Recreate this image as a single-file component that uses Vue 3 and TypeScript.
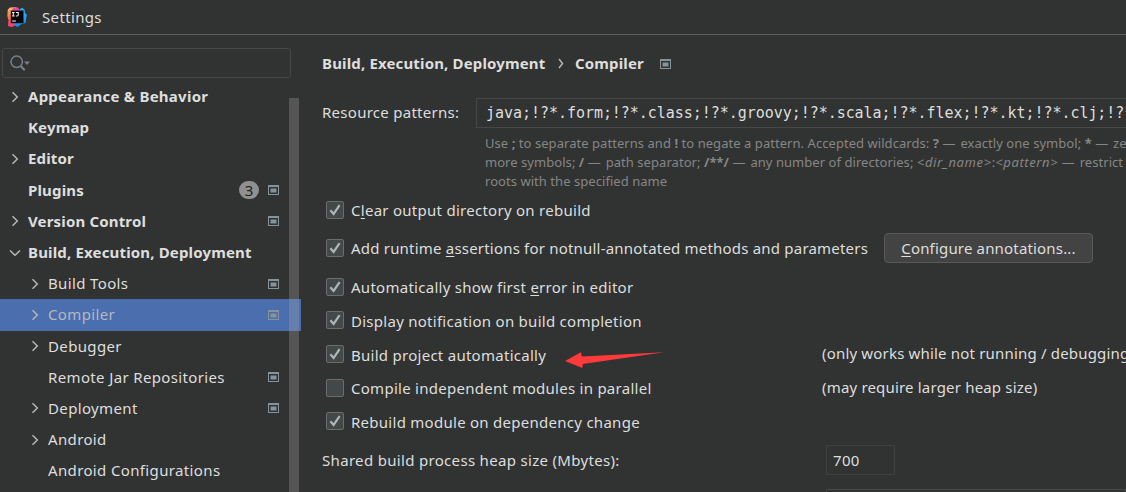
<script setup lang="ts">
interface TreeRow {
  label: string
  level: 0 | 1
  arrow?: 'right' | 'down'
  badge?: number
  project?: boolean
  selected?: boolean
}

interface Option {
  before: string
  mnemonic?: string
  after?: string
  checked: boolean
  note?: string
  action?: boolean
  size: string
}

const rows: TreeRow[] = [
  { label: 'Appearance & Behavior', level: 0, arrow: 'right' },
  { label: 'Keymap', level: 0 },
  { label: 'Editor', level: 0, arrow: 'right' },
  { label: 'Plugins', level: 0, badge: 3, project: true },
  { label: 'Version Control', level: 0, arrow: 'right', project: true },
  { label: 'Build, Execution, Deployment', level: 0, arrow: 'down' },
  { label: 'Build Tools', level: 1, arrow: 'right', project: true },
  { label: 'Compiler', level: 1, arrow: 'right', project: true, selected: true },
  { label: 'Debugger', level: 1, arrow: 'right' },
  { label: 'Remote Jar Repositories', level: 1, project: true },
  { label: 'Deployment', level: 1, arrow: 'right', project: true },
  { label: 'Android', level: 1, arrow: 'right' },
  { label: 'Android Configurations', level: 1 },
]

const options: Option[] = [
  { before: 'C', mnemonic: 'l', after: 'ear output directory on rebuild', checked: true, size: 'tall' },
  { before: 'Add runtime ', mnemonic: 'a', after: 'ssertions for notnull-annotated methods and parameters', checked: true, action: true, size: 'taller' },
  { before: 'Automatically show first ', mnemonic: 'e', after: 'rror in editor', checked: true, size: 'medium' },
  { before: 'Display notification on build completion', checked: true, size: 'short' },
  { before: 'Build project automatically', checked: true, note: '(only works while not running / debugging)', size: 'short' },
  { before: 'Compile independent modules in parallel', checked: false, note: '(may require larger heap size)', size: 'short' },
  { before: 'Rebuild module on dependency change', checked: true, size: 'short' },
]
</script>

<template>
  <div class="window">
    <header class="titlebar">
      <svg class="logo" width="20" height="20" viewBox="0 0 20 20">
        <defs>
          <linearGradient id="warm" x1="0" y1="0" x2="0" y2="1">
            <stop offset="0" stop-color="#fdc06a" />
            <stop offset=".4" stop-color="#fb8a3c" />
            <stop offset=".7" stop-color="#ff5560" />
            <stop offset="1" stop-color="#fa3b6c" />
          </linearGradient>
          <linearGradient id="cool" x1="0" y1="0" x2="0" y2="1">
            <stop offset="0" stop-color="#2fb4fa" />
            <stop offset="1" stop-color="#0c8df5" />
          </linearGradient>
        </defs>
        <path d="M.800 2.500L3 .5l6-.3L11 3 8 17l-2 2.500L1 19l1-4L.3 9z" fill="url(#warm)" />
        <path d="M6 .8L10.500.3l3.500 4L4 8.500z" fill="#f0479f" />
        <path d="M12 3L15 .8l2.500 1.700.5 3.500 1.800 1.500L18.500 16l-4 1-4 3-6-3 9-2z" fill="url(#cool)" />
        <path d="M1.200 14l5 1 2 3-3 2-4-1z" fill="#f7436d" />
        <rect x="3.800" y="3.500" width="12.700" height="12.700" fill="#0b0508" />
        <path d="M5 5.500h2.600M6.300 5.500v3.600M5 9h2.600M9 5.500h2.200v2.600q0 .9-1 .9H8.800M5 14h4" fill="none" stroke="#f1eeee" stroke-width="1.100" />
      </svg>
      <span class="title">Settings</span>
    </header>

    <div class="body">
      <aside class="sidebar">
        <div class="search">
          <svg width="22" height="17" viewBox="0 0 22 17">
            <circle cx="6.700" cy="6.800" r="5.700" fill="none" stroke="#77828a" stroke-width="1.500" />
            <path d="M10.700 11l4 4.300" stroke="#77828a" stroke-width="2" />
            <path d="M14 6.500h6l-3 3.500z" fill="#77828a" />
          </svg>
        </div>
        <div class="tree">
          <div class="rows">
            <div
              v-for="row in rows"
              :key="row.label"
              class="row"
              :class="{ child: row.level === 1, selected: row.selected }"
            >
              <span class="arrow">
                <svg v-if="row.arrow === 'right'" width="12" height="12" viewBox="0 0 12 12">
                  <path d="M3.500 1.300L8.300 6l-4.800 4.700" />
                </svg>
                <svg v-else-if="row.arrow === 'down'" width="12" height="12" viewBox="0 0 12 12">
                  <path d="M1 3.500l5 4.800 5-4.800" />
                </svg>
              </span>
              <span class="label">{{ row.label }}</span>
              <span v-if="row.badge" class="badge">{{ row.badge }}</span>
              <span class="slot">
                <svg v-if="row.project" class="project" width="11" height="10" viewBox="0 0 11 10">
                  <path d="M0 0h11v10H0zM1 2v7h9V2z" fill-rule="evenodd" />
                  <path d="M2.500 3.500h6v4h-6z" />
                </svg>
              </span>
            </div>
          </div>
          <div class="scrollbar"></div>
        </div>
      </aside>

      <main class="content">
        <div class="crumbs">
          <span>Build, Execution, Deployment</span>
          <svg class="sep" width="6" height="11" viewBox="0 0 6 11">
            <path d="M1 1l3.500 4.500L1 10" />
          </svg>
          <span>Compiler</span>
          <svg class="project" width="11" height="10" viewBox="0 0 11 10">
            <path d="M0 0h11v10H0zM1 2v7h9V2z" fill-rule="evenodd" />
            <path d="M2.500 3.500h6v4h-6z" />
          </svg>
        </div>

        <div class="patterns">
          <span class="patterns-label">Resource patterns:</span>
          <div class="patterns-input">java;!?*.form;!?*.class;!?*.groovy;!?*.scala;!?*.flex;!?*.kt;!?*.clj;!?*.aj</div>
        </div>
        <div class="hint">
          <div>Use <b>;</b> to separate patterns and <b>!</b> to negate a pattern. Accepted wildcards: <b>?</b> <s>—</s> exactly one symbol; <b>*</b> <s>—</s> zero or</div>
          <div>more symbols; <b>/</b> <s>—</s> path separator; <b>/**/</b> <s>—</s> any number of directories; <i>&lt;dir_name&gt;</i>:<i>&lt;pattern&gt;</i> <s>—</s> restrict to</div>
          <div>roots with the specified name</div>
        </div>

        <div v-for="option in options" :key="option.before" class="option" :class="option.size">
          <span class="box">
            <svg v-if="option.checked" width="16" height="16" viewBox="0 0 16 16">
              <path d="M3.400 8.300l3.200 3.600 6-8.700" fill="none" stroke="#b3b5b6" stroke-width="2.200" />
            </svg>
          </span>
          <span class="text">{{ option.before }}<u v-if="option.mnemonic">{{ option.mnemonic }}</u>{{ option.after }}</span>
          <button v-if="option.action" class="button"><span><u>C</u>onfigure annotations...</span></button>
          <span v-if="option.note" class="note">{{ option.note }}</span>
        </div>

        <div class="heap">
          <span class="heap-label">Shared build process heap size (Mbytes):</span>
          <div class="heap-input">700</div>
        </div>
        <div class="next-input"></div>
      </main>
    </div>

    <svg class="pointer" width="100" height="18" viewBox="0 0 100 18">
      <path d="M0 9L16 .3l.8 4.300L99 .2 17.800 12l-.4 4z" fill="#ff3a3a" />
    </svg>
  </div>
</template>

<style>
body {
  margin: 0;
  background: #313332;
}
</style>

<style scoped>
.window {
  position: relative;
  width: 1126px;
  height: 492px;
  overflow: hidden;
  display: flex;
  flex-direction: column;
  background: #313332;
  color: #dedede;
  font: 15px/20px "Noto Sans", "Open Sans", sans-serif;
  letter-spacing: .27px;
  white-space: nowrap;
}
.titlebar {
  flex: none;
  box-sizing: border-box;
  height: 35px;
  padding-left: 7px;
  border-bottom: 1px solid #5b5d5d;
  display: flex;
  align-items: center;
}
.title {
  margin-left: 15px;
  letter-spacing: .35px;
}
.body {
  flex: 1;
  min-height: 0;
  display: flex;
}
.sidebar {
  width: 301px;
  flex: none;
  display: flex;
  flex-direction: column;
}
.search {
  box-sizing: border-box;
  flex: none;
  width: 289px;
  height: 30px;
  margin: 13px 0 0 2px;
  padding: 6px 0 0 7px;
  border: 1px solid #454747;
  border-radius: 3px;
}
.search svg {
  display: block;
}
.tree {
  position: relative;
  flex: 1;
  min-height: 0;
  margin-top: 13px;
  overflow: hidden;
}
.rows {
  margin-top: -10px;
}
.row {
  height: 31.200px;
  box-sizing: border-box;
  padding-left: 9px;
  padding-right: 22px;
  display: flex;
  align-items: center;
  font-weight: 700;
  letter-spacing: .16px;
}
.row:first-child {
  letter-spacing: .25px;
}
.row.child {
  padding-left: 29px;
  font-weight: 400;
  letter-spacing: .36px;
}
.row.selected {
  background: #4b6eaf;
  color: #b4b9c0;
}
.arrow {
  width: 19px;
  height: 12px;
  flex: none;
}
.arrow svg {
  display: block;
}
.arrow path,
.sep path {
  fill: none;
  stroke: #b4b6b7;
  stroke-width: 1.500;
}
.label {
  flex: 1;
  padding-bottom: 1px;
}
.badge {
  width: 20px;
  height: 18px;
  border-radius: 9px;
  background: #909090;
  color: #202020;
  font-weight: 400;
  line-height: 19px;
  text-align: center;
}
.slot {
  width: 20px;
  height: 10px;
  display: flex;
  justify-content: flex-end;
}
.project {
  display: block;
  fill: #87939a;
}
.scrollbar {
  position: absolute;
  left: 289px;
  top: 7px;
  bottom: 0;
  width: 10px;
  background: rgba(166, 166, 166, .3);
}
.content {
  flex: 1;
  min-width: 0;
  padding-left: 21px;
  overflow: hidden;
}
.crumbs {
  height: 57px;
  display: flex;
  align-items: center;
  font-weight: 700;
  letter-spacing: .15px;
}
.crumbs span {
  padding-bottom: 2px;
}
.sep {
  margin: 0 11px 0 12.500px;
}
.crumbs .project {
  margin-left: 16px;
}
.patterns {
  height: 30px;
  margin-top: 6px;
  display: flex;
  align-items: center;
}
.patterns-label {
  width: 154px;
  flex: none;
  padding-bottom: 2px;
}
.patterns-input {
  box-sizing: border-box;
  flex: none;
  width: 700px;
  height: 30px;
  padding-left: 9px;
  border: 1px solid #464848;
  font: 15px/28px "DejaVu Sans Mono", monospace;
  letter-spacing: -.04px;
}
.hint {
  padding: 6px 0 0 163px;
  height: 57px;
  color: #868686;
  font-size: 13px;
  line-height: 19px;
  letter-spacing: .05px;
}
.hint s {
  text-decoration: none;
  letter-spacing: 1.500px;
}
.hint i {
  letter-spacing: .6px;
}
.option {
  display: flex;
  align-items: center;
  padding-left: 4px;
  height: 33.700px;
}
.option.tall {
  height: 38px;
}
.option.taller {
  height: 39px;
}
.option.medium {
  box-sizing: border-box;
  height: 36px;
  padding-top: 2px;
}
.box {
  box-sizing: border-box;
  width: 18px;
  height: 18px;
  flex: none;
  margin: 0 0 1px -.5px;
  border: 1px solid #6b6d6d;
  border-radius: 2px;
  background: #434849;
}
.box svg {
  display: block;
}
.text {
  margin-left: 7.500px;
  width: 471px;
  flex: none;
}
.taller .text {
  width: 533px;
  padding-bottom: 1px;
  letter-spacing: .2px;
}
.note {
  padding-bottom: 3px;
  letter-spacing: .18px;
}
u {
  text-underline-offset: 2px;
}
.button {
  box-sizing: border-box;
  width: 209px;
  height: 30px;
  margin-bottom: 1px;
  padding: 0 0 1px;
  border: 1px solid #585a5a;
  border-radius: 4px;
  background: #434343;
  color: inherit;
  font: inherit;
  letter-spacing: .17px;
}
.heap {
  display: flex;
  align-items: center;
  height: 30px;
  margin-top: 6px;
  letter-spacing: .32px;
}
.heap-label {
  width: 504px;
}
.heap-input {
  box-sizing: border-box;
  width: 69px;
  height: 30px;
  padding-left: 6px;
  border: 1px solid #404242;
  line-height: 28px;
}
.next-input {
  margin: 14px 0 0 504px;
  height: 30px;
  border: 1px solid #464848;
}
.pointer {
  position: absolute;
  left: 565px;
  top: 352px;
}
</style>
